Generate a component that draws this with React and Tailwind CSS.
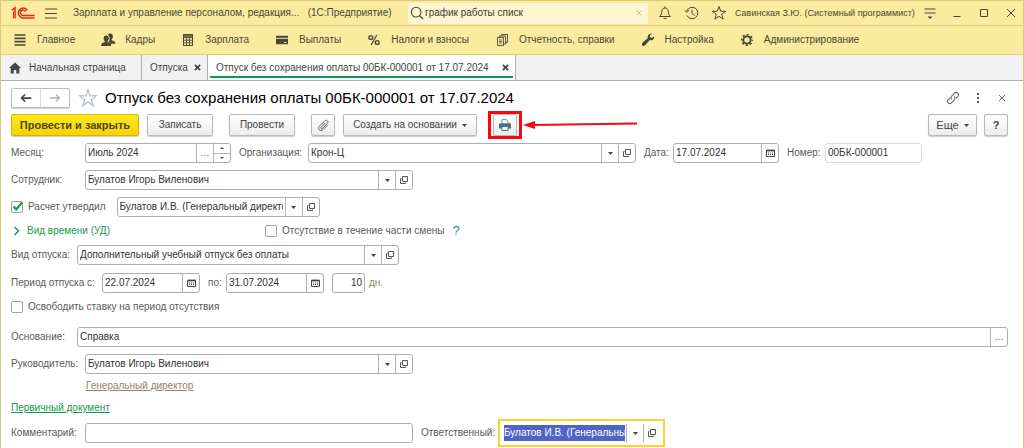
import { useState } from "react";
import clsx from "clsx";

const MENU = [
  { label: "Главное", icon: LinesIcon },
  { label: "Кадры", icon: PeopleIcon },
  { label: "Зарплата", icon: CalcIcon },
  { label: "Выплаты", icon: CardIcon },
  { label: "Налоги и взносы", icon: PercentIcon },
  { label: "Отчетность, справки", icon: ReportIcon },
  { label: "Настройка", icon: WrenchIcon },
  { label: "Администрирование", icon: GearIcon },
];

function Svg({ size = 16, className, children }) {
  return (
    <svg
      width={size}
      height={size}
      viewBox="0 0 16 16"
      fill="none"
      stroke="currentColor"
      className={clsx("shrink-0", className)}
      aria-hidden="true"
    >
      {children}
    </svg>
  );
}

function LinesIcon() {
  return (
    <Svg>
      <path d="M2.5 3h11M2.5 6.3h11M2.5 9.7h11M2.5 13h11" strokeWidth="1.7" />
    </Svg>
  );
}

function PeopleIcon() {
  return (
    <Svg>
      <g fill="currentColor" stroke="none">
        <path d="M10.3 1.6c1.6 0 2.6 1.2 2.6 2.8 0 1.2-.5 2.2-1.2 2.9v.9l2.5 1c.7.3 1 .8 1 1.5v1.1h-4.3c-.4-.8-1.2-1.3-2.6-1.8 1-1 1.4-2 1.4-3.5 0-1.6-.6-2.9-1.8-3.6.6-.8 1.4-1.3 2.4-1.3z" />
        <path d="M6.2 3.4c1.6 0 2.6 1.2 2.6 2.9 0 1.2-.5 2.2-1.2 2.9v.9l2.6 1c.6.3.9.7.9 1.4V14H1.3v-1.5c0-.7.3-1.1.9-1.4l2.6-1v-.9c-.7-.7-1.2-1.7-1.2-2.9 0-1.7 1-2.9 2.6-2.9z" />
      </g>
    </Svg>
  );
}

function CalcIcon() {
  return (
    <Svg>
      <rect x="3.5" y="2.5" width="9" height="11" />
      <path d="M3.5 4h9" strokeWidth="1.5" />
      <path d="M3.5 5.5h9M3.5 8.2h9M3.5 10.8h9M6.5 5.5v8M9.5 5.5v8" strokeWidth=".9" />
    </Svg>
  );
}

function CardIcon() {
  return (
    <Svg>
      <path d="M2 4.8h12" strokeWidth="2" />
      <path d="M2 9.5h12" strokeWidth="5.5" />
      <path d="M10 10.5h2.5" stroke="#fbeb9e" />
    </Svg>
  );
}

function PercentIcon() {
  return (
    <Svg>
      <circle cx="4.8" cy="5.5" r="1.9" strokeWidth="1.4" />
      <circle cx="11.2" cy="10.5" r="1.9" strokeWidth="1.4" />
      <path d="M10.8 3 5.2 13" strokeWidth="1.2" />
    </Svg>
  );
}

function ReportIcon() {
  return (
    <Svg>
      <path d="M3.5 5.5h6v8h-6zM5.5 5.5V4h6v8h-2M7.5 4V2.5h6v8h-2" strokeWidth=".9" />
      <path d="M5 8h3M5 9.5h3M5 11h3" strokeWidth=".8" />
    </Svg>
  );
}

function WrenchIcon() {
  return (
    <Svg>
      <path
        d="M14 4.6 11.8 6 10 5l.1-2 2.1-1.1C10.5 1.3 8.7 2 8 3.5c-.4.8-.4 1.600-.2 2.4l-5.200 4.800c-.9.9-.9 2-.2 2.700s1.900.7 2.700-.2l4.700-5.100c1.800.6 3.500-.1 4.200-1.600.3-.7.3-1.300 0-1.900z"
        fill="currentColor"
        stroke="none"
      />
    </Svg>
  );
}

function GearIcon() {
  return (
    <Svg>
      <circle cx="8" cy="8" r="3.6" strokeWidth="1.8" />
      <circle cx="8" cy="8" r="5.2" strokeWidth="1.8" strokeDasharray="2 2.084" strokeDashoffset="1" />
    </Svg>
  );
}

function Logo() {
  return (
    <svg width="24" height="14" viewBox="0 0 24 14" fill="none" stroke="#dc2b24" className="shrink-0" aria-label="1C">
      <path d="M.8 4.2 4 1.8v10.5" strokeWidth="1.5" />
      <path d="M2.6 5.3v7" strokeWidth="1" />
      <path d="M16.6 4.3A5 5 0 1 0 12 11.9h11.5" strokeWidth="1.5" />
      <path d="M14.6 5.6A2.7 2.7 0 1 0 12 9.4h11.5" strokeWidth="1.5" />
    </svg>
  );
}

function HistoryIcon() {
  return (
    <Svg>
      <path d="M2.8 6A5.7 5.7 0 1 1 3 10.5" />
      <path d="M.8 5.2 2.8 7.4 5 5.2M8 4.5v4l2.6 2" />
    </Svg>
  );
}

function StarIcon({ size, className }) {
  return (
    <Svg size={size} className={className}>
      <path d="m8 1.5 1.7 4.7 4.9.1-3.9 3 1.4 4.8L8 11.3l-4.1 2.8 1.4-4.8-3.9-3 4.9-.1z" />
    </Svg>
  );
}

function Caret() {
  return (
    <svg width="5" height="3" viewBox="0 0 5 3" className="shrink-0" aria-hidden="true">
      <path d="M0 0h5L2.5 3z" fill="#444" />
    </svg>
  );
}

function OpenIcon() {
  return (
    <svg width="8" height="8" viewBox="0 0 8 8" fill="none" stroke="#555" className="shrink-0" aria-hidden="true">
      <path d="M2.5.5h5v5h-5zM1.5 2.5h-1v5h5v-1" />
    </svg>
  );
}

function CalendarIcon() {
  return (
    <svg width="9" height="8" viewBox="0 0 9 8" fill="none" stroke="#444" className="shrink-0" aria-hidden="true">
      <path d="M.5 1.5h8v6h-8z" />
      <path d="M.5 1.5h8" strokeWidth="1.8" />
      <path d="M2 4h5M2 5.500h5" strokeDasharray="1 1" />
    </svg>
  );
}

function CrossIcon({ size = 8, className }) {
  return (
    <svg
      width={size}
      height={size}
      viewBox="0 0 8 8"
      fill="none"
      stroke="currentColor"
      className={clsx("shrink-0", className)}
      aria-hidden="true"
    >
      <path d="m1 1 6 6M7 1 1 7" />
    </svg>
  );
}

function PrinterIcon() {
  return (
    <svg width="12" height="12" viewBox="0 0 12 12" className="shrink-0" aria-hidden="true">
      <path d="M3 4.500V.6h4.200L9 2.400v2.100" fill="#fff" stroke="#5b7a96" strokeWidth=".9" />
      <path d="M1.500 4.200h9A1.300 1.300 0 0 1 12 5.500v4H0v-4a1.300 1.300 0 0 1 1.500-1.300z" fill="#4a6d8c" />
      <path d="M2.800 7.600h6.400v3.800H2.800z" fill="#fff" stroke="#4a6d8c" />
    </svg>
  );
}

function FieldButton({ label, children }) {
  return (
    <button
      type="button"
      aria-label={label}
      className="flex w-[17px] shrink-0 items-center justify-center border-l border-[#b4b4b4]"
    >
      {children}
    </button>
  );
}

function Field({ id, value, className, inputClass, readOnly, children }) {
  return (
    <div
      className={clsx(
        "flex h-5 rounded-[3px] border bg-white",
        readOnly ? "border-[#dcdcdc]" : "border-[#adadad]",
        className
      )}
    >
      <input
        id={id}
        type="text"
        defaultValue={value}
        readOnly={readOnly}
        className={clsx("min-w-0 flex-1 px-0.5 text-[#333] outline-none", inputClass)}
      />
      {children}
    </div>
  );
}

function RefButtons() {
  return (
    <>
      <FieldButton label="Выбрать из списка">
        <Caret />
      </FieldButton>
      <FieldButton label="Открыть">
        <OpenIcon />
      </FieldButton>
    </>
  );
}

function CheckField({ label, defaultChecked = false }) {
  const [checked, setChecked] = useState(defaultChecked);
  return (
    <label className="flex items-center gap-[5px]">
      <span className="relative flex">
        <input
          type="checkbox"
          checked={checked}
          onChange={(e) => setChecked(e.target.checked)}
          className="size-3 appearance-none rounded-xs border border-[#a0a0a0] bg-white"
        />
        {checked && (
          <svg
            width="12"
            height="12"
            viewBox="0 0 12 12"
            fill="none"
            stroke="#0a9a4a"
            strokeWidth="2"
            className="pointer-events-none absolute inset-0"
            aria-hidden="true"
          >
            <path d="m2.5 5.5 2.7 3L11 1.5" />
          </svg>
        )}
      </span>
      {label}
    </label>
  );
}

function CommandButton({ className, primary, children, ...rest }) {
  return (
    <button
      type="button"
      className={clsx(
        "flex h-[22px] shrink-0 items-center justify-center rounded-xs border shadow-[0_1px_1px_rgba(0,0,0,0.2)]",
        primary
          ? "border-[#d4b400] bg-linear-to-b from-[#ffe81a] to-[#f7d300] text-[11px] font-bold text-[#4a4320]"
          : "border-[#b9b9b9] bg-linear-to-b from-white to-[#ececec] text-[#444]",
        className
      )}
      {...rest}
    >
      {children}
    </button>
  );
}

function TitleBar() {
  return (
    <header className="flex h-[26px] items-center border-y border-[#d9ca7e] pr-1 pl-2.5 text-[#4a4634]">
      <Logo />
      <button type="button" aria-label="Главное меню" className="ml-2">
        <Svg>
          <path d="M2 4h12M2 8.5h12M2 13h12" />
        </Svg>
      </button>
      <div className="ml-3.5 w-[335px] truncate whitespace-pre">
        Зарплата и управление персоналом, редакция...   (1С:Предприятие)
      </div>
      <div className="flex h-[21px] w-60 items-center rounded-xs bg-[#fdf6d0] px-0.5">
        <Svg size={14}>
          <circle cx="7" cy="7" r="5.5" strokeWidth="1.2" />
          <path d="m11 11 4 4" strokeWidth="1.6" />
        </Svg>
        <input
          type="text"
          aria-label="Поиск"
          defaultValue="график работы списк"
          className="min-w-0 flex-1 px-px text-[#3c3a30] outline-none"
        />
        <CrossIcon size={6} className="mr-1 text-[#b5ae8c]" />
      </div>
      <div className="ml-auto flex items-center">
        <div className="flex gap-[11px]">
          <button type="button" aria-label="Уведомления">
            <Svg>
              <path d="M2.5 11.5C4.500 10 4.500 8 5 5.5 5.400 3.700 6.500 3 8 3s2.600.7 3 2.500c.5 2.500.5 4.500 2.500 6zM8 3V1.5M6.5 13.5h3" />
            </Svg>
          </button>
          <button type="button" aria-label="История">
            <HistoryIcon />
          </button>
          <button type="button" aria-label="Избранное">
            <StarIcon />
          </button>
        </div>
        <span className="ml-2 w-[187px] text-[9px] whitespace-nowrap">Савинская З.Ю. (Системный программист)</span>
        <div className="flex gap-[11px]">
          <button type="button" aria-label="Настройки окна">
            <Svg>
              <path d="M2.5 4h11M2.5 8h11" />
              <path d="M5.5 11.5h5L8 14z" fill="currentColor" stroke="none" />
            </Svg>
          </button>
          <button type="button" aria-label="Свернуть">
            <Svg>
              <path d="M4.5 11.5h7" />
            </Svg>
          </button>
          <button type="button" aria-label="Развернуть">
            <Svg>
              <path d="M4.5 4.5h7v7h-7z" />
            </Svg>
          </button>
          <button type="button" aria-label="Закрыть">
            <Svg>
              <path d="m4 4 8 8M12 4l-8 8" />
            </Svg>
          </button>
        </div>
      </div>
    </header>
  );
}

function Tabs() {
  return (
    <nav className="flex h-[26px] border-b border-[#b0b0b0] bg-[#f1f1f1] text-[#444]">
      <button type="button" className="flex w-[141px] items-center gap-1.5 border-r border-[#b0b0b0] pl-1.5">
        <Svg>
          <path d="M8 2.5 2 8h1.7v5.5h3V10h2.6v3.5h3V8H14z" fill="currentColor" stroke="none" />
        </Svg>
        Начальная страница
      </button>
      <button type="button" className="flex w-[66px] items-center justify-between border-r border-[#b0b0b0] pr-1.5 pl-2">
        Отпуска
        <CrossIcon size={7} className="stroke-2" />
      </button>
      <button type="button" className="flex w-[308px] border-r border-[#b0b0b0] bg-white px-0.5 pb-0.5">
        <span className="flex h-full flex-1 items-center justify-between border-b-2 border-[#0e9c4c] pt-1 pr-1 pl-1.5">
          Отпуск без сохранения оплаты 00БК-000001 от 17.07.2024
          <CrossIcon size={7} className="stroke-2" />
        </span>
      </button>
    </nav>
  );
}

function FormHeader() {
  return (
    <div className="flex h-[33px] items-center pr-0.5">
      <div className="flex h-5 w-[59px] rounded-xs border border-[#bdbdbd] shadow-[0_1px_1px_rgba(0,0,0,0.2)]">
        <button
          type="button"
          aria-label="Назад"
          className="flex flex-1 items-center justify-center border-r border-[#dadada] text-[#444]"
        >
          <Svg size={14}>
            <path d="M14 8H3M7 4 3 8l4 4" strokeWidth="2" />
          </Svg>
        </button>
        <button type="button" aria-label="Вперед" className="flex flex-1 items-center justify-center text-[#b0b0b0]">
          <Svg size={14}>
            <path d="M2 8h11M9 4l4 4-4 4" strokeWidth="1.5" />
          </Svg>
        </button>
      </div>
      <button type="button" aria-label="В избранное" className="ml-2 text-[#b4bcc6]">
        <StarIcon size={20} />
      </button>
      <h1 className="ml-[7px] text-[15px] text-black">Отпуск без сохранения оплаты 00БК-000001 от 17.07.2024</h1>
      <div className="ml-auto flex items-center gap-4 text-[#666]">
        <button type="button" aria-label="Получить ссылку">
          <Svg size={14}>
            <path
              d="M6.5 9.5c-1.1-1.200-1-2.700 0-3.700l3.300-3.300c1-1 2.600-1 3.600 0s1 2.600 0 3.600l-2 2M9.500 6.500c1.100 1.200 1 2.700 0 3.700l-3.300 3.300c-1 1-2.600 1-3.600 0s-1-2.600 0-3.600l2-2"
              strokeWidth="1.2"
            />
          </Svg>
        </button>
        <button type="button" aria-label="Еще действия">
          <svg width="4" height="10" viewBox="0 0 4 10" fill="#555" aria-hidden="true">
            <path d="M1 0h2v2H1zM1 4h2v2H1zM1 8h2v2H1z" />
          </svg>
        </button>
        <button type="button" aria-label="Закрыть форму" className="pl-0.5">
          <CrossIcon />
        </button>
      </div>
    </div>
  );
}

function CommandBar() {
  return (
    <div className="flex items-center">
      <CommandButton primary className="w-32">
        Провести и закрыть
      </CommandButton>
      <CommandButton className="ml-2 w-[66px]">Записать</CommandButton>
      <CommandButton className="ml-4 w-[66px]">Провести</CommandButton>
      <CommandButton className="ml-4 w-6" aria-label="Присоединенные файлы">
        <Svg size={13}>
          <path d="m13.5 7-6 6c-1.500 1.500-3.500 1.500-4.700.3-1.200-1.200-1.200-3 .2-4.500l6.500-6.500c1-1 2.500-1 3.300-.1.9.9.9 2.200-.1 3.300l-6 6c-.5.5-1.200.6-1.600.1-.5-.4-.4-1 .1-1.600l5.300-5.300" />
        </Svg>
      </CommandButton>
      <CommandButton className="ml-2 w-[134px] gap-[5px]">
        Создать на основании
        <Caret />
      </CommandButton>
      <div className="relative ml-4">
        <CommandButton className="w-6" aria-label="Печать">
          <PrinterIcon />
        </CommandButton>
        <div className="pointer-events-none absolute -inset-x-[5px] -inset-y-[3px] border-3 border-[#f8080c]" />
        <svg
          width="116"
          height="14"
          viewBox="0 0 116 14"
          className="pointer-events-none absolute top-1 left-[29px]"
          aria-hidden="true"
        >
          <path d="M10 7 115 5.5" stroke="#f8080c" strokeWidth="2.2" />
          <path d="M1 7 13 3v8z" fill="#f8080c" />
        </svg>
      </div>
      <CommandButton className="ml-auto w-[49px] gap-[5px] text-[11px]">
        Еще
        <Caret />
      </CommandButton>
      <CommandButton className="ml-[7px] w-6 text-[11px] font-bold" aria-label="Справка">
        ?
      </CommandButton>
    </div>
  );
}

function LeaveForm() {
  return (
    <form className="mt-[7px] text-[#5a5a5a]">
      <div className="flex items-center">
        <label htmlFor="month" className="w-[74px]">Месяц:</label>
        <Field id="month" value="Июль 2024" className="w-[146px]">
          <FieldButton label="Выбрать месяц">...</FieldButton>
          <div className="flex w-[17px] flex-col border-l border-[#b4b4b4]">
            <button
              type="button"
              aria-label="Больше"
              className="flex flex-1 items-center justify-center border-b border-[#b4b4b4]"
            >
              <svg width="4" height="2" viewBox="0 0 4 2" aria-hidden="true">
                <path d="M0 2h4L2 0z" fill="#444" />
              </svg>
            </button>
            <button type="button" aria-label="Меньше" className="flex flex-1 items-center justify-center">
              <svg width="4" height="2" viewBox="0 0 4 2" aria-hidden="true">
                <path d="M0 0h4L2 2z" fill="#444" />
              </svg>
            </button>
          </div>
        </Field>
        <label htmlFor="org" className="ml-2 w-[69px]">Организация:</label>
        <Field id="org" value="Крон-Ц" className="w-[328px]">
          <RefButtons />
        </Field>
        <label htmlFor="date" className="ml-2 w-[29px]">Дата:</label>
        <Field id="date" value="17.07.2024" className="w-[106px]">
          <FieldButton label="Календарь">
            <CalendarIcon />
          </FieldButton>
        </Field>
        <label htmlFor="number" className="ml-2 w-[38px]">Номер:</label>
        <Field id="number" value="00БК-000001" readOnly className="w-[97px]" />
      </div>

      <div className="mt-[7px] flex items-center">
        <label htmlFor="employee" className="w-[74px]">Сотрудник:</label>
        <Field id="employee" value="Булатов Игорь Виленович" className="w-[328px]">
          <RefButtons />
        </Field>
      </div>

      <div className="mt-[7px] flex items-center gap-[11px]">
        <CheckField label="Расчет утвердил" defaultChecked />
        <Field id="approver" value="Булатов И.В. (Генеральный директор)" className="w-[203px]">
          <RefButtons />
        </Field>
      </div>

      <div className="mt-1.5 flex h-4 items-center">
        <button type="button" className="flex w-[254px] items-center gap-1.5 pl-0.5 text-[#139a4e]">
          <svg
            width="8"
            height="10"
            viewBox="0 0 8 10"
            fill="none"
            stroke="currentColor"
            strokeWidth="1.5"
            aria-hidden="true"
          >
            <path d="m1.5 1 4 4-4 4" />
          </svg>
          Вид времени (УД)
        </button>
        <CheckField label="Отсутствие в течение части смены" />
        <button type="button" aria-label="Подсказка" className="ml-2 text-[13px] text-[#1583c8]">?</button>
      </div>

      <div className="mt-1.5 flex items-center">
        <label htmlFor="kind" className="w-[66px]">Вид отпуска:</label>
        <Field id="kind" value="Дополнительный учебный отпуск без оплаты" className="w-[322px]">
          <RefButtons />
        </Field>
      </div>

      <div className="mt-2 flex items-center">
        <label htmlFor="from" className="w-[91px] whitespace-nowrap">Период отпуска с:</label>
        <Field id="from" value="22.07.2024" className="w-[98px]">
          <FieldButton label="Календарь">
            <CalendarIcon />
          </FieldButton>
        </Field>
        <label htmlFor="to" className="ml-2 w-[18px]">по:</label>
        <Field id="to" value="31.07.2024" className="w-[98px]">
          <FieldButton label="Календарь">
            <CalendarIcon />
          </FieldButton>
        </Field>
        <Field id="days" value="10" className="ml-2 w-[33px]" inputClass="text-right" />
        <label htmlFor="days" className="ml-1 text-[#8f8775]">дн.</label>
      </div>

      <div className="mt-1.5 flex h-4 items-center">
        <CheckField label="Освободить ставку на период отсутствия" />
      </div>

      <div className="mt-3 flex items-center">
        <label htmlFor="reason" className="w-[66px]">Основание:</label>
        <Field id="reason" value="Справка" className="flex-1">
          <FieldButton label="Выбрать основание">...</FieldButton>
        </Field>
      </div>

      <div className="mt-[7px] flex items-center">
        <label htmlFor="head" className="w-[74px]">Руководитель:</label>
        <Field id="head" value="Булатов Игорь Виленович" className="w-[328px]">
          <RefButtons />
        </Field>
      </div>

      <div className="mt-1 flex h-4 items-center pl-[75px]">
        <a href="#position" className="text-[#8f8566] underline">Генеральный директор</a>
      </div>
      <div className="mt-1.5 flex h-4 items-center">
        <a href="#source" className="text-[#139a4e] underline">Первичный документ</a>
      </div>

      <div className="mt-[3px] flex items-center">
        <label htmlFor="comment" className="w-[74px]">Комментарий:</label>
        <Field id="comment" value="" className="w-[328px]" />
        <label htmlFor="responsible" className="ml-2 w-[77px]">Ответственный:</label>
        <div className="flex h-7 w-[167px] border-2 border-[#fdd12f] p-[3px]">
          <input
            id="responsible"
            type="text"
            defaultValue="Булатов И.В. (Генеральный директор)"
            className="m-px min-w-0 flex-1 bg-[#5065c3] text-white outline-none"
          />
          <RefButtons />
        </div>
      </div>
    </form>
  );
}

export default function App() {
  return (
    <div className="min-h-screen border-x border-[#d9ca7e] bg-white font-['Liberation_Sans',Arial,sans-serif] text-[10px] leading-4">
      <div className="bg-[#fbeb9e]">
        <TitleBar />
        <nav className="flex h-[29px] items-center gap-[25px] border-b border-[#d9ca7e] pl-[11px] text-[#4a4634]">
          {MENU.map(({ label, icon: Icon }) => (
            <button key={label} type="button" className="flex items-center gap-[9px] whitespace-nowrap">
              <Icon />
              {label}
            </button>
          ))}
        </nav>
      </div>
      <Tabs />
      <main className="pr-[15px] pl-2.5">
        <FormHeader />
        <CommandBar />
        <LeaveForm />
      </main>
    </div>
  );
}
